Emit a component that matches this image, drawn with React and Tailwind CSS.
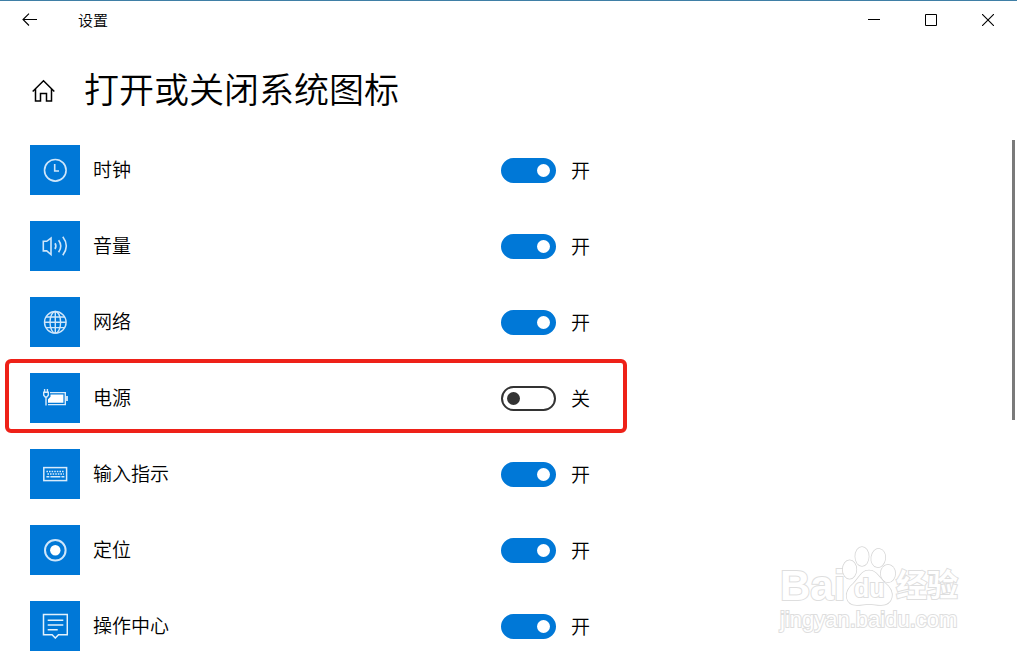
import { useState } from "react";

const ClockIcon = () => (
    <svg width="26" height="26" viewBox="0 0 26 26" fill="none" stroke="#cfe6fa" strokeWidth="1.6">
        <circle cx="13.3" cy="13.3" r="10.8" />
        <path d="M12.7 7v7H17" />
    </svg>
);

const VolumeIcon = () => (
    <svg width="26" height="26" viewBox="0 0 26 26" fill="none" stroke="#cfe6fa" strokeWidth="1.6">
        <path d="M1.3 8.3h3.4l4.3-3.3v16.5l-4.3-3.6H1.3z" />
        <path d="M13 10.2q1.8 2.8 0 5.8" />
        <path d="M16.6 7.2q4.4 5.8 0 12" />
        <path d="M20.8 3.8q7 9.2 0 18.4" />
    </svg>
);

const GlobeIcon = () => (
    <svg width="26" height="26" viewBox="0 0 26 26" fill="none" stroke="#cfe6fa" strokeWidth="1.4">
        <circle cx="13.3" cy="13.3" r="10.8" />
        <ellipse cx="13.3" cy="13.3" rx="5.3" ry="10.8" />
        <path d="M13.3 2.5v21.6M2.5 13.3h21.6M4.1 8h18.4M4.1 18.6h18.4" />
    </svg>
);

const PowerIcon = () => (
    <svg width="26" height="26" viewBox="0 0 26 26" fill="none" stroke="#d8ebfb" strokeWidth="1.4">
        <path d="M8 7.6h15.3v12H6" />
        <path d="M25 11v5" strokeWidth="1.8" />
        <path d="M8.5 9.5h12.9v8.3H6v-3.6l2.5-2.5z" fill="#fff" stroke="none" />
        <path d="M2.6 4v3M5.4 4v3M1 7.3h6M1.7 7.5v2.7L3.2 12h1.6l1.5-1.8V7.5M4 12v8.5" />
    </svg>
);

const KeyboardIcon = () => (
    <svg width="26" height="26" viewBox="0 0 26 26" fill="none" stroke="#d8ebfb">
        <rect x="1.8" y="6.6" width="22.8" height="13" strokeWidth="1.5" />
        <path d="M4.4 10.5h18" strokeWidth="1.5" strokeDasharray="1.6 1" />
        <path d="M5.4 13.1h16.5" strokeWidth="1.5" strokeDasharray="1.6 1" />
        <path d="M4.4 15.8h3M8.4 15.8h10M19.4 15.8h3" strokeWidth="1.5" />
    </svg>
);

const LocationIcon = () => (
    <svg width="26" height="26" viewBox="0 0 26 26" fill="none" stroke="#cfe6fa" strokeWidth="2">
        <circle cx="13.3" cy="13.3" r="10.3" />
        <circle cx="13.3" cy="13.3" r="5.2" fill="#fff" stroke="none" />
    </svg>
);

const ActionIcon = () => (
    <svg width="26" height="26" viewBox="0 0 26 26" fill="none" stroke="#e3f1fc" strokeWidth="1.5">
        <path d="M1.5 1.5h23.8v20.2h-8.8L13.3 25l-3.2-3.3H1.5z" />
        <path d="M5.7 7.2h15.6M5.7 12h15.6M5.7 16.8h10" />
    </svg>
);

const systemIcons = [
    { id: "clock", name: "时钟", icon: ClockIcon, on: true },
    { id: "volume", name: "音量", icon: VolumeIcon, on: true },
    { id: "network", name: "网络", icon: GlobeIcon, on: true },
    { id: "power", name: "电源", icon: PowerIcon, on: false, marked: true },
    { id: "input", name: "输入指示", icon: KeyboardIcon, on: true },
    { id: "location", name: "定位", icon: LocationIcon, on: true },
    { id: "action", name: "操作中心", icon: ActionIcon, on: true },
];

function TitleBar() {
    return (
        <header className="flex h-10 shrink-0 items-center border-t border-[#3f7fa6] pb-px">
            <button aria-label="返回" className="flex h-full w-[60px] items-center justify-center">
                <svg width="16" height="14" viewBox="0 0 16 14" fill="none" stroke="#000" strokeWidth="1.1">
                    <path d="M15 6.5H1M7 .7 1 6.5l6 6" />
                </svg>
            </button>
            <span className="ml-[18px] text-[15px] leading-5">设置</span>
            <div className="mr-px ml-auto flex h-full">
                <button aria-label="最小化" className="flex w-[57px] items-center justify-center">
                    <svg width="12" height="12" viewBox="0 0 12 12" stroke="#000">
                        <path d="M0 5.5h12" />
                    </svg>
                </button>
                <button aria-label="最大化" className="flex w-[57px] items-center justify-center">
                    <svg width="12" height="12" viewBox="0 0 12 12" fill="none" stroke="#000">
                        <path d="M.5.5h11v11H.5z" />
                    </svg>
                </button>
                <button aria-label="关闭" className="flex w-[57px] items-center justify-center">
                    <svg width="12" height="12" viewBox="0 0 12 12" stroke="#000" strokeWidth="1.1">
                        <path d="m0 0 12 12M12 0 0 12" />
                    </svg>
                </button>
            </div>
        </header>
    );
}

function SettingRow({ item, onToggle }) {
    const Icon = item.icon;

    return (
        <li className="relative flex h-[76px] items-center pl-[30px]">
            <span className="mr-[13px] flex size-[50px] shrink-0 items-center justify-center bg-[#0078d7]">
                <Icon />
            </span>
            <label htmlFor={item.id} className="w-[408px] pb-[2px] text-[19px] leading-6">
                {item.name}
            </label>
            <input
                id={item.id}
                type="checkbox"
                role="switch"
                checked={item.on}
                onChange={() => onToggle(item.id)}
                className="flex h-[25px] w-[55px] shrink-0 appearance-none items-center rounded-full border-2 border-[#333] px-[4px] before:size-[13px] before:rounded-full before:bg-[#333] checked:justify-end checked:border-[#0078d7] checked:bg-[#0078d7] checked:before:bg-white"
            />
            <span className="ml-[15px] text-[19px] leading-6">{item.on ? "开" : "关"}</span>
            {item.marked && (
                <span className="pointer-events-none absolute -top-px left-[5px] h-[74px] w-[622px] rounded-md border-4 border-[#ee2118]" />
            )}
        </li>
    );
}

function Watermark() {
    return (
        <div
            aria-hidden="true"
            className="pointer-events-none absolute right-[53px] bottom-[22px] w-[184px] font-['Liberation_Sans','Noto_Sans_CJK_SC',sans-serif] text-white [paint-order:stroke_fill] [-webkit-text-stroke:2px_#dedede]"
        >
            <div className="flex h-[62px] items-end font-bold">
                <span className="w-[62px] text-[42px] leading-10">Bai</span>
                <span className="relative h-[60px] w-[54px]">
                    <svg className="absolute inset-0" width="54" height="60" viewBox="0 0 54 60" fill="#fff" stroke="#d6d6d6" strokeWidth="1.5">
                        <ellipse cx="7.6" cy="23.5" rx="6.8" ry="9.2" />
                        <ellipse cx="20" cy="10.5" rx="6.7" ry="9.5" />
                        <ellipse cx="36.3" cy="12" rx="7" ry="9.2" transform="rotate(8 36.3 12)" />
                        <ellipse cx="46" cy="27.5" rx="7.2" ry="8.7" />
                        <path d="M27 24.5c-8 0-10 8-15.5 13C1 46 3 59 15 59c5 0 8-1 12-1s7 1 12 1c12 0 15-13 4.5-21.5C37.5 32.5 35 24.5 27 24.5z" />
                    </svg>
                    <span className="absolute bottom-[2px] left-3 text-[25px] leading-8">du</span>
                </span>
                <span className="text-[31px] leading-10">经验</span>
            </div>
            <div className="text-[22px] leading-7">jingyan.baidu.com</div>
        </div>
    );
}

export default function App() {
    const [items, setItems] = useState(systemIcons);

    const handleToggle = (id) => {
        setItems(items.map((item) => (item.id === id ? { ...item, on: !item.on } : item)));
    };

    return (
        <div className="relative flex h-screen flex-col overflow-hidden bg-white font-['Noto_Sans_CJK_SC',sans-serif] font-[350] text-black">
            <TitleBar />
            <div className="flex h-[92px] shrink-0 items-center pt-[10px] pl-8">
                <a href="#home" aria-label="主页" className="mr-7">
                    <svg width="24" height="24" viewBox="0 0 24 24" fill="none" stroke="#000" strokeWidth="1.5">
                        <path d="M.7 12.5 11.5 1.7l10.8 10.8M3.5 10v12h5v-7.5h6V22h5V10" />
                    </svg>
                </a>
                <h1 className="pb-[6px] text-[35px] leading-[48px] font-[350]">打开或关闭系统图标</h1>
            </div>
            <main className="flex min-h-0 flex-1">
                <ul className="flex-1 overflow-hidden">
                    {items.map((item) => (
                        <SettingRow key={item.id} item={item} onToggle={handleToggle} />
                    ))}
                </ul>
                <div className="mt-2 mr-[2px] h-[280px] w-[3px] bg-[#7a7a7a]" />
            </main>
            <Watermark />
        </div>
    );
}
